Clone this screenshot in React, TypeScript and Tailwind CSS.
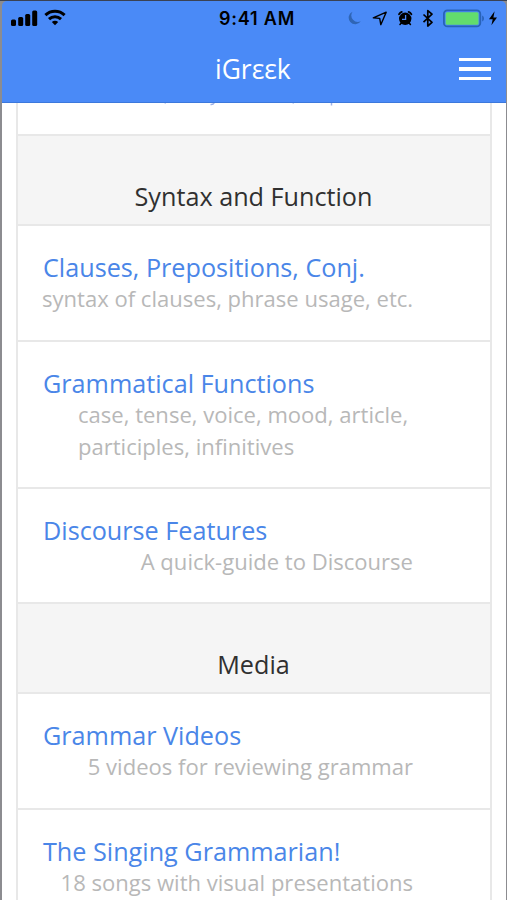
import { clsx } from 'clsx';

interface Entry {
  title: string;
  description: string;
  height: string;
  wrap?: boolean;
}

interface Section {
  heading: string;
  entries: Entry[];
}

const sections: Section[] = [
  {
    heading: 'Syntax and Function',
    entries: [
      { title: 'Clauses, Prepositions, Conj.', description: 'syntax of clauses, phrase usage, etc.', height: 'h-[116px]' },
      { title: 'Grammatical Functions', description: 'case, tense, voice, mood, article, participles, infinitives', height: 'h-[147px]', wrap: true },
      { title: 'Discourse Features', description: 'A quick-guide to Discourse', height: 'h-[115px]' },
    ],
  },
  {
    heading: 'Media',
    entries: [
      { title: 'Grammar Videos', description: '5 videos for reviewing grammar', height: 'h-[116px]' },
      { title: 'The Singing Grammarian!', description: '18 songs with visual presentations', height: 'h-[116px]' },
    ],
  },
];

const StatusBar = () => (
  <div className="grid h-[33px] grid-cols-[208px_1fr_150px] items-center pl-[9px] pr-[8px] text-black">
    <div className="flex items-center gap-[5px]">
      <svg width="28" height="18" viewBox="0 0 28 18" fill="currentColor">
        <rect x="0" y="10.500" width="5" height="6.500" rx="1.500" />
        <rect x="7.200" y="8" width="5" height="9" rx="1.500" />
        <rect x="14.200" y="5" width="5" height="12" rx="1.500" />
        <rect x="21.200" y="1.500" width="5" height="15.500" rx="1.500" />
      </svg>
      <svg width="22" height="17" viewBox="0 0 22 17" fill="none" stroke="currentColor" strokeWidth="3">
        <path d="M1.400 6.200a13.800 13.800 0 0 1 19.200 0" />
        <path d="M5 10.100a8.800 8.800 0 0 1 12 0" />
        <path d="M11 16.300 7.800 13.100a4.800 4.800 0 0 1 6.400 0z" fill="currentColor" stroke="none" />
      </svg>
    </div>
    <span className="whitespace-nowrap pt-[2px] font-[Inter,sans-serif] text-[18px] font-semibold leading-none tracking-[0.8px]">
      9:41 AM
    </span>
    <svg width="150" height="24" viewBox="349 5.500 150 24">
      <path d="M353.500 11.200a6.600 6.600 0 1 0 8.300 9.600 6.600 6.600 0 0 1-8.300-9.600z" fill="#2f65b5" />
      <path d="M374.300 17.400 387.200 11.700 381.800 24.200 380.700 17.900z" fill="none" stroke="currentColor" strokeWidth="1.400" strokeLinejoin="round" />
      <circle cx="406.200" cy="18.300" r="6.200" fill="currentColor" />
      <path d="M400 13.700a6.500 6.500 0 0 1 2.800-2.300M412.400 13.700a6.500 6.500 0 0 0-2.800-2.300" fill="none" stroke="currentColor" strokeWidth="1.800" strokeLinecap="round" />
      <path d="M402.200 22.600l-1.200 1.400M410.200 22.600l1.200 1.400" stroke="currentColor" strokeWidth="1.600" strokeLinecap="round" />
      <path d="M406.600 14.600v4.200h-3.600" fill="none" stroke="#4a8af7" strokeWidth="1.300" />
      <path d="M424.500 14l8.500 7.900-4.200 3.600V10.100l4.200 3.600-8.500 7.900" fill="none" stroke="currentColor" strokeWidth="1.700" strokeLinejoin="round" />
      <rect x="444.900" y="9.900" width="36.400" height="16" rx="3.500" fill="none" stroke="#2862b8" strokeWidth="1.800" />
      <rect x="446.700" y="11.700" width="32.800" height="12.600" rx="1.500" fill="#62dc6d" />
      <path d="M483.200 14.900c2.300 1 2.300 5 0 6z" fill="#2862b8" />
      <path d="M495.600 10.800 490 18.800h3.700l-1.300 6 5.600-7.800h-3.600z" fill="currentColor" />
    </svg>
  </div>
);

const Header = () => (
  <header className="h-[102px] rounded-t-[5px] border-b border-[#3c78dc] bg-[#4a8af7]">
    <StatusBar />
    <div className="flex h-[70px] items-center justify-between pl-[213px] pr-[15px]">
      <h1 className="pt-px text-[26.400px] leading-none text-white">iGrεεk</h1>
      <button aria-label="Menu" className="flex flex-col gap-[6px]">
        <span className="h-[3.500px] w-[32px] bg-white" />
        <span className="h-[3.500px] w-[32px] bg-white" />
        <span className="h-[3.500px] w-[32px] bg-white" />
      </button>
    </div>
  </header>
);

const EntryRow = ({ entry }: { entry: Entry }) => (
  <a className={clsx('block border-b-2 border-[#e8e8e8] pl-[24px] pt-[25px]', entry.height)}>
    <h3 className="pl-px text-[25.200px] leading-[32px] text-[#4a86e8]">{entry.title}</h3>
    <p
      className={clsx(
        'w-[371px] text-[22.050px] leading-[31.500px] text-[#b8b8b8]',
        entry.wrap ? 'pl-[36px]' : 'whitespace-nowrap text-right'
      )}
    >
      {entry.description}
    </p>
  </a>
);

export default function App() {
  return (
    <div className="h-[900px] w-[507px] overflow-hidden border-t border-[#3a4254] bg-[#8c8c90] pl-[2px] pr-px font-['Open_Sans',sans-serif]">
      <Header />
      <main className="h-[797px] overflow-hidden bg-white px-[14px]">
        <div className="border-x-2 border-[#e8e8e8]">
          <div className="h-[33px] border-b-2 border-[#e8e8e8]">
            {/* tail of the row scrolled under the header */}
            <svg width="470" height="4" viewBox="18 103 470 4" fill="none" stroke="#9fb2e6" strokeWidth="1.500">
              <path d="M165.500 102l-.5 1.500M214.500 102q-1 3-4 2.500M293.500 102l-.5 1.500M331.500 102v3.500" />
            </svg>
          </div>
          {sections.map((section) => (
            <section key={section.heading}>
              <h2 className="h-[90px] border-b-2 border-[#e8e8e8] bg-[#f5f5f5] pr-px pt-[43px] text-center text-[25.200px] leading-[34px] text-[#303030]">
                {section.heading}
              </h2>
              {section.entries.map((entry) => (
                <EntryRow key={entry.title} entry={entry} />
              ))}
            </section>
          ))}
        </div>
      </main>
    </div>
  );
}
